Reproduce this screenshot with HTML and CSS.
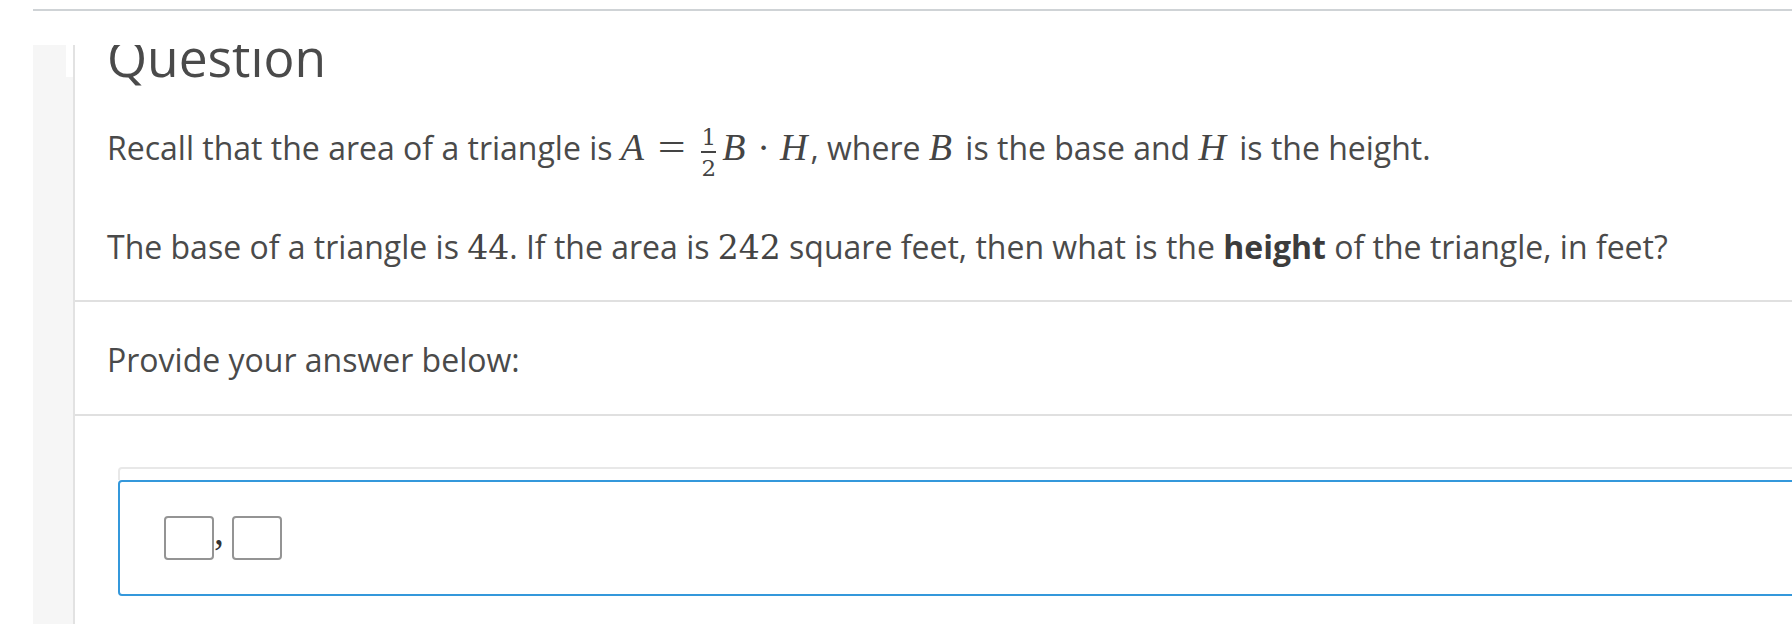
FILE: index.html
```html
<!DOCTYPE html>
<html lang="en">
<head>
<meta charset="utf-8">
<title>Question</title>
<link rel="stylesheet" href="styles.css">
</head>
<body>
<div class="shell">
  <div class="topline"></div>
  <div class="main">
    <aside class="side">
      <div class="side-top"><div class="side-tab"></div></div>
      <div class="side-rest"></div>
    </aside>
    <div class="content">
      <section class="sec sec-question">
        <h1 class="title">Question</h1>
        <p class="para p-first">Recall that the area of a triangle is <span class="math math-main"><span class="mi">A</span><span class="mo eq">=</span><span class="frac"><span class="num">1</span><span class="bar"></span><span class="den">2</span></span><span class="mi mi-b">B</span><span class="mo dot">·</span><span class="mi">H</span></span>, where <span class="math math-single"><span class="mi">B</span></span> is the base and <span class="math math-single"><span class="mi">H</span></span> is the height.</p>
        <p class="para p-second">The base of a triangle is <span class="math"><span class="mn">44</span></span>. If the area is <span class="math"><span class="mn">242</span></span> square feet, then what is the <strong class="strong">height</strong> of the triangle, in feet?</p>
      </section>
      <section class="sec sec-prompt">
        <p class="para">Provide your answer below:</p>
      </section>
      <section class="sec-answer">
        <div class="tool-cap"></div>
        <div class="answer-box">
          <div class="slot"></div>
          <span class="sep">,</span>
          <div class="slot"></div>
        </div>
      </section>
    </div>
  </div>
</div>
</body>
</html>
```
FILE: styles.css
```css
html, body {
  margin: 0;
  padding: 0;
  background: #ffffff;
}

body {
  font-family: "Open Sans", "Noto Sans", sans-serif;
  color: #4a4a4a;
  overflow: hidden;
}

.shell {
  margin-left: 33px;
  padding-top: 9px;
  height: 615px;
  display: flex;
  flex-direction: column;
  overflow: hidden;
}

.topline {
  height: 2px;
  background: #cfd3d6;
  margin-bottom: 34px;
  flex-shrink: 0;
}

.main {
  flex: 1;
  display: flex;
  min-height: 0;
}

.side {
  width: 40px;
  flex-shrink: 0;
  display: flex;
  flex-direction: column;
  border-right: 2px solid #e2e2e2;
}

.side-top {
  height: 32px;
  display: flex;
}

.side-tab {
  width: 33px;
  background: #f6f6f6;
}

.side-rest {
  flex: 1;
  background: #f6f6f6;
}

.content {
  flex: 1;
  min-width: 0;
  overflow: hidden;
}

.sec {
  padding: 0 0 29px 32px;
  border-bottom: 2px solid #e0e0e0;
}

.title {
  margin: -22px 0 0 0;
  font-size: 51.5px;
  line-height: 68px;
  font-weight: 400;
  color: #4a4a4a;
}

.para {
  margin: 0;
  font-size: 32px;
  line-height: 48px;
  white-space: nowrap;
}

.p-first {
  margin-top: 33px;
}

.p-second {
  margin-top: 51px;
}

.sec-prompt {
  padding-top: 34px;
  padding-bottom: 30px;
}

.strong {
  font-weight: 700;
  color: #3c3c3c;
}

.math {
  font-family: "Liberation Serif", "Times New Roman", serif;
  font-size: 38px;
  line-height: 30px;
  color: #444444;
}

.math-main {
  margin-right: 3px;
}

.math-single {
  margin-right: 5px;
}

.mi {
  font-style: italic;
}

.mn {
  font-family: "DejaVu Serif", serif;
  font-size: 33px;
}

.mo {
  display: inline-block;
}

.eq {
  transform: scaleX(1.3);
  margin: 0 18px 0 17px;
}

.dot {
  margin: 0 10px 0 12px;
}

.mi-b {
  margin-left: 5px;
}

.frac {
  display: inline-flex;
  flex-direction: column;
  align-items: center;
  vertical-align: 15px;
  margin: -8px 0 -8px 0;
  padding: 0 1px;
}

.num,
.den {
  font-family: "DejaVu Serif", serif;
  font-size: 23px;
  line-height: 20px;
}

.bar {
  align-self: stretch;
  height: 1.5px;
  background: #444444;
  margin: 4px 0 5px 0;
}

.sec-answer {
  padding: 51px 0 0 43px;
}

.tool-cap {
  height: 11px;
  border: 2px solid #e8e8e8;
  border-bottom: 0;
  border-radius: 4px 4px 0 0;
  width: 2000px;
}

.answer-box {
  width: 2000px;
  height: 44px;
  padding: 34px 0 34px 44px;
  border: 2px solid #3498db;
  border-radius: 4px;
  display: flex;
  align-items: flex-start;
}

.slot {
  width: 46px;
  height: 40px;
  border: 2px solid #949494;
  border-radius: 4px;
  flex-shrink: 0;
}

.sep {
  width: 18px;
  height: 30px;
  line-height: 30px;
  font-family: "Liberation Serif", "Times New Roman", serif;
  font-size: 40px;
  color: #333333;
  flex-shrink: 0;
}
```
